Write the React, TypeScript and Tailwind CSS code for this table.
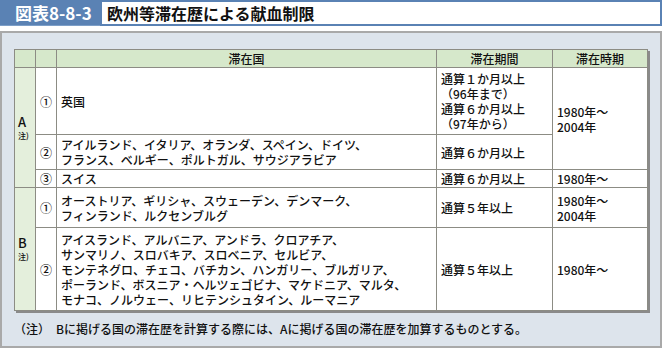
import React from "react";

const font = { fontFamily: '"Noto Sans CJK JP", "Noto Sans", sans-serif' };

const td = "border border-[#8c8c84] px-[4px] align-middle leading-[15px]";

const App = () => {
  return (
    <main className="w-[662px] h-[349px] bg-white text-[#111] text-[12px] font-medium" style={font}>
      {/* TITLE */}
      <div className="flex h-[26px]">
        <div className="w-[100px] bg-[#5a82b4] text-white font-bold text-[17px] flex items-center pl-[15px] border-b border-b-[#7d9fc8]">
          図表8-8-3
        </div>
        <div className="flex-1 border-2 border-[#5a82b4] flex items-center pl-[5px] font-bold text-[16px]">
          欧州等滞在歴による献血制限
        </div>
      </div>

      {/* PANEL */}
      <div className="mt-[5px] h-[317px] border-2 border-[#a9a9a9] bg-[#dde4ec] pl-[12px] pt-[16px]">
        <table className="table-fixed border-collapse w-[633px] bg-white shadow-[2px_2px_0_#8a8a8a]">
          <colgroup>
            <col className="w-[21px]" />
            <col className="w-[21px]" />
            <col className="w-[380px]" />
            <col className="w-[116px]" />
            <col className="w-[95px]" />
          </colgroup>
          <tbody>
            <tr className="h-[18px] bg-[#d6e8cb]">
              <td className={td}></td>
              <td className={td}></td>
              <td className={td + " text-center"}>滞在国</td>
              <td className={td + " text-center"}>滞在期間</td>
              <td className={td + " text-center"}>滞在時期</td>
            </tr>
            <tr className="h-[67px]">
              <td rowSpan={3} className={td + " bg-[#e4efdc] !px-[3px]"}>
                <div className="text-[13px] leading-[16px]">A</div>
                <div className="text-[8px] leading-[12px]">注)</div>
              </td>
              <td className={td + " text-center !px-0"}>①</td>
              <td className={td}>英国</td>
              <td className={td}>
                通算１か月以上
                <br />
                （96年まで）
                <br />
                通算６か月以上
                <br />
                （97年から）
              </td>
              <td rowSpan={2} className={td}>
                1980年～
                <br />
                2004年
              </td>
            </tr>
            <tr className="h-[35px]">
              <td className={td + " text-center !px-0"}>②</td>
              <td className={td}>
                アイルランド、イタリア、オランダ、スペイン、ドイツ、
                <br />
                フランス、ベルギー、ポルトガル、サウジアラビア
              </td>
              <td className={td}>通算６か月以上</td>
            </tr>
            <tr className="h-[18px]">
              <td className={td + " text-center !px-0"}>③</td>
              <td className={td}>スイス</td>
              <td className={td}>通算６か月以上</td>
              <td className={td}>1980年～</td>
            </tr>
            <tr className="h-[40px]">
              <td rowSpan={2} className={td + " bg-[#e4efdc] !px-[3px]"}>
                <div className="text-[13px] leading-[16px]">B</div>
                <div className="text-[8px] leading-[12px]">注)</div>
              </td>
              <td className={td + " text-center !px-0"}>①</td>
              <td className={td}>
                オーストリア、ギリシャ、スウェーデン、デンマーク、
                <br />
                フィンランド、ルクセンブルグ
              </td>
              <td className={td}>通算５年以上</td>
              <td className={td}>
                1980年～
                <br />
                2004年
              </td>
            </tr>
            <tr className="h-[83px]">
              <td className={td + " text-center !px-0"}>②</td>
              <td className={td}>
                アイスランド、アルバニア、アンドラ、クロアチア、
                <br />
                サンマリノ、スロバキア、スロベニア、セルビア、
                <br />
                モンテネグロ、チェコ、バチカン、ハンガリー、ブルガリア、
                <br />
                ポーランド、ボスニア・ヘルツェゴビナ、マケドニア、マルタ、
                <br />
                モナコ、ノルウェー、リヒテンシュタイン、ルーマニア
              </td>
              <td className={td}>通算５年以上</td>
              <td className={td}>1980年～</td>
            </tr>
          </tbody>
        </table>
        <p className="mt-[10px] leading-[15px]">（注）　Bに掲げる国の滞在歴を計算する際には、Aに掲げる国の滞在歴を加算するものとする。</p>
      </div>
    </main>
  );
};

export default App;
